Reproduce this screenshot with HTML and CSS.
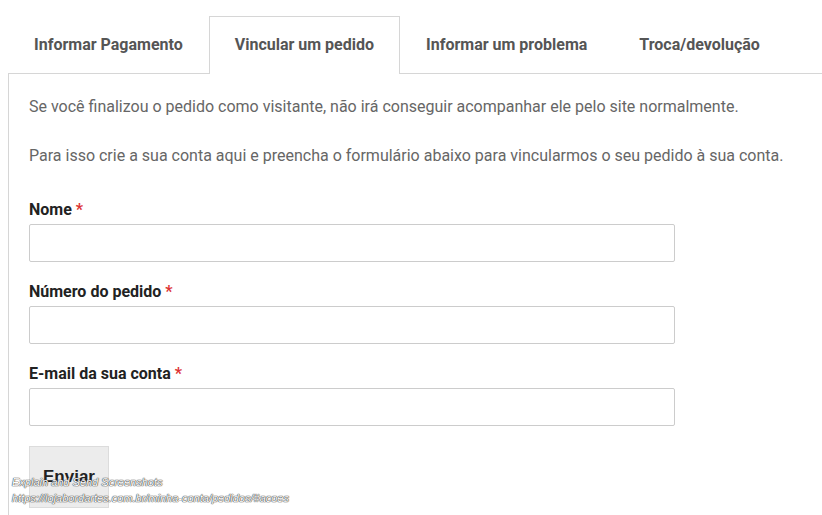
FILE: index.html
```html
<!DOCTYPE html>
<html lang="pt-BR">
<head>
<meta charset="utf-8">
<title>Vincular um pedido</title>
<link rel="stylesheet" href="styles.css">
</head>
<body>
<div class="tabs">
  <ul class="tab-list">
    <li class="tab">Informar Pagamento</li>
    <li class="tab active">Vincular um pedido</li>
    <li class="tab">Informar um problema</li>
    <li class="tab">Troca/devolução</li>
  </ul>
  <div class="panel">
    <p class="intro">Se você finalizou o pedido como visitante, não irá conseguir acompanhar ele pelo site normalmente.</p>
    <p class="intro">Para isso crie a sua conta aqui e preencha o formulário abaixo para vincularmos o seu pedido à sua conta.</p>
    <form class="form">
      <div class="field">
        <label class="label">Nome <span class="req">*</span></label>
        <input class="input" type="text">
      </div>
      <div class="field">
        <label class="label">Número do pedido <span class="req">*</span></label>
        <input class="input" type="text">
      </div>
      <div class="field">
        <label class="label">E-mail da sua conta <span class="req">*</span></label>
        <input class="input" type="text">
      </div>
      <button class="btn" type="button">Enviar</button>
    </form>
  </div>
</div>
<div class="overlay">
  <div class="ov-title">Explain and Send Screenshots</div>
  <div class="ov-url">https://lojabordartes.com.br/minha-conta/pedidos/#acoes</div>
</div>
</body>
</html>
```

FILE: styles.css
```css
html, body {
  margin: 0;
  padding: 0;
  background: #fff;
}
body {
  padding: 16px 0 0 8px;
  font-family: Roboto, "Liberation Sans", Arial, sans-serif;
  overflow: hidden;
  height: 515px;
  box-sizing: border-box;
}
.tabs {
  width: 814px;
}
.tab-list {
  list-style: none;
  margin: 0;
  padding: 0;
  display: flex;
  position: relative;
  z-index: 1;
}
.tab {
  height: 58px;
  box-sizing: border-box;
  padding: 0 25px 3px;
  display: flex;
  align-items: center;
  font-size: 16px;
  font-weight: 700;
  color: #555;
  border: 1px solid transparent;
  border-bottom: none;
  margin-bottom: -1px;
  white-space: nowrap;
}
.tab.active {
  border-color: #d6d6d6;
  background: #fff;
}
.panel {
  border-top: 1px solid #d6d6d6;
  border-left: 1px solid #d6d6d6;
  padding: 21px 20px 40px 20px;
  min-height: 500px;
}
.intro {
  margin: 0 0 25px 0;
  font-size: 16px;
  line-height: 24px;
  color: #666;
}
.form {
  margin-top: 30px;
}
.field {
  margin-bottom: 18px;
}
.label {
  display: block;
  font-size: 16px;
  font-weight: 700;
  color: #222;
  line-height: 24px;
  margin-bottom: 2px;
}
.req {
  color: #d33;
}
.input {
  display: block;
  box-sizing: border-box;
  width: 646px;
  height: 38px;
  border: 1px solid #ccc;
  border-radius: 2px;
  background: #fff;
  margin: 0;
}
.btn {
  margin-top: 2px;
  width: 80px;
  height: 62px;
  background: #ececec;
  border: 1px solid #dcdcdc;
  font-family: "Liberation Sans", Arial, sans-serif;
  font-size: 17px;
  font-weight: 700;
  color: #222;
  padding: 0;
}
.overlay {
  position: absolute;
  left: 12px;
  top: 475px;
  font-family: "Liberation Sans", Arial, sans-serif;
  font-style: italic;
  font-size: 11px;
  line-height: 15px;
  color: #fff;
  text-shadow: 0 0 1px #444, 0 0 1px #444, 0 0 1px #444;
}
.ov-url {
  margin-top: 1px;
}
```
